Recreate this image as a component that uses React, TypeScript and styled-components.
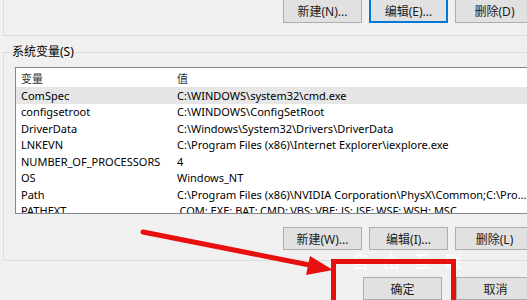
import React from 'react';
import styled, { createGlobalStyle } from 'styled-components';

const GlobalStyle = createGlobalStyle`
  html, body { margin: 0; padding: 0; background: #f0f0f0; }
  * { box-sizing: border-box; }
`;

const Dialog = styled.div`
  position: relative;
  width: 527px;
  height: 300px;
  overflow: hidden;
  background: #f0f0f0;
  font-family: "Noto Sans", "Noto Sans CJK SC", sans-serif;
  font-size: 12px;
  color: #000;
`;

const UserGroup = styled.div`
  margin-left: 3px;
  width: 540px;
  border-left: 1px solid #dcdcdc;
  border-bottom: 1px solid #dcdcdc;
  padding: 0 0 12px 279px;
`;

const ButtonRow = styled.div<{ $pad: number }>`
  display: flex;
  gap: 7px;
  padding-left: ${(p) => p.$pad}px;
`;

const Button = styled.div<{ $focus?: boolean; $top?: boolean }>`
  flex: none;
  width: 79px;
  height: ${(p) => (p.$top ? 25 : 23)}px;
  margin-top: ${(p) => (p.$top ? -2 : 0)}px;
  display: flex;
  align-items: center;
  justify-content: center;
  background: #e1e1e1;
  border: 1px solid ${(p) => (p.$focus ? '#0078d7' : '#adadad')};
  box-shadow: ${(p) => (p.$focus ? 'inset 0 0 0 1px #0078d7' : 'none')};
  font-size: 12px;
  color: #1a1a1a;
`;

const SysGroup = styled.fieldset`
  margin: 9px 0 0 3px;
  width: 540px;
  height: 216px;
  padding: 8px 0 0 11px;
  border: 1px solid #dcdcdc;
  border-right: none;
`;

const Legend = styled.legend`
  padding: 0 1px;
  margin-left: -4px;
  font-size: 12px;
  line-height: 14px;
`;

const ListBox = styled.div`
  position: relative;
  width: 520px;
  height: 147px;
  background: #fff;
  border: 1px solid #828790;
  overflow: hidden;
  font-size: 11px;
`;

const Row = styled.div<{ $head?: boolean; $selected?: boolean }>`
  display: grid;
  grid-template-columns: 156px 1fr;
  height: ${(p) => (p.$head ? 19 : 16.5)}px;
  align-items: center;
  padding-left: 5px;
  margin-right: 6px;
  white-space: nowrap;
  background: ${(p) => (p.$selected ? '#e6e6e6' : 'transparent')};
  color: ${(p) => (p.$head ? '#333' : '#000')};
`;

const Cell = styled.span`
  overflow: hidden;
`;

const ScrollTrack = styled.div`
  position: absolute;
  top: 0;
  right: 0;
  width: 7px;
  height: 100%;
  background: #f4f4f4;
`;

const ScrollThumb = styled.div`
  margin-top: 18px;
  height: 43px;
  background: #dadada;
`;

const SysButtons = styled(ButtonRow)`
  margin-top: 13px;
`;

const Footer = styled(ButtonRow)`
  margin-top: 16px;
`;

const Overlay = styled.svg`
  position: absolute;
  left: 0;
  top: 0;
  pointer-events: none;
`;

const Stamp = styled.div`
  position: absolute;
  left: 352px;
  top: 248px;
  font-family: "Noto Sans CJK SC", sans-serif;
  font-weight: 700;
  font-size: 17px;
  letter-spacing: 14px;
  color: rgba(255, 255, 255, 0.75);
`;

const rows: [string, string][] = [
  ['ComSpec', 'C:\\WINDOWS\\system32\\cmd.exe'],
  ['configsetroot', 'C:\\WINDOWS\\ConfigSetRoot'],
  ['DriverData', 'C:\\Windows\\System32\\Drivers\\DriverData'],
  ['LNKEVN', 'C:\\Program Files (x86)\\Internet Explorer\\iexplore.exe'],
  ['NUMBER_OF_PROCESSORS', '4'],
  ['OS', 'Windows_NT'],
  ['Path', 'C:\\Program Files (x86)\\NVIDIA Corporation\\PhysX\\Common;C:\\Pro...'],
  ['PATHEXT', '.COM;.EXE;.BAT;.CMD;.VBS;.VBE;.JS;.JSE;.WSF;.WSH;.MSC'],
];

export default function App() {
  return (
    <Dialog>
      <GlobalStyle />
      <UserGroup>
        <ButtonRow $pad={0}>
          <Button $top>新建(N)...</Button>
          <Button $top $focus>编辑(E)...</Button>
          <Button $top>删除(D)</Button>
        </ButtonRow>
      </UserGroup>

      <SysGroup>
        <Legend>系统变量(S)</Legend>
        <ListBox>
          <Row $head>
            <Cell>变量</Cell>
            <Cell>值</Cell>
          </Row>
          {rows.map(([name, value], i) => (
            <Row key={name} $selected={i === 0}>
              <Cell>{name}</Cell>
              <Cell>{value}</Cell>
            </Row>
          ))}
          <ScrollTrack>
            <ScrollThumb />
          </ScrollTrack>
        </ListBox>
        <SysButtons $pad={268}>
          <Button>新建(W)...</Button>
          <Button>编辑(I)...</Button>
          <Button>删除(L)</Button>
        </SysButtons>
      </SysGroup>

      <Footer $pad={363}>
        <Button>确定</Button>
        <Button style={{ marginLeft: 7 }}>取消</Button>
      </Footer>

      <Stamp>自由互联</Stamp>

      <Overlay width={527} height={300} viewBox="0 0 527 300">
        <line x1={143} y1={232} x2={312} y2={265.5} stroke="#e8100f" strokeWidth={5} strokeLinecap="round" />
        <polygon points="333,270 310,256 306,275" fill="#e8100f" />
        <rect x={333.5} y={261.5} width={120} height={50} fill="none" stroke="#e8100f" strokeWidth={5} />
      </Overlay>
    </Dialog>
  );
}
